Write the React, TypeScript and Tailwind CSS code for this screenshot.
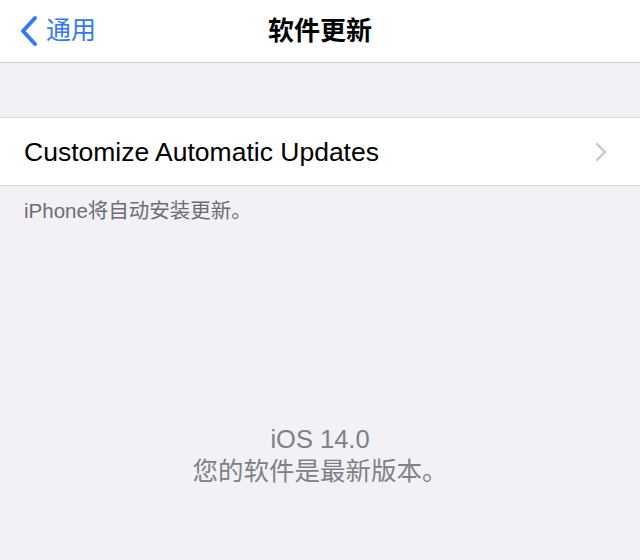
const zh = { fontFamily: '"Liberation Sans", "Noto Sans CJK SC", sans-serif' };

const BackChevron = () => (
  <svg width="20" height="32" viewBox="0 0 20 32" fill="none">
    <path d="M16 3 L4 16 L16 29" stroke="#3478f6" strokeWidth="4" strokeLinecap="round" strokeLinejoin="round" />
  </svg>
);

const RowChevron = () => (
  <svg width="12" height="20" viewBox="0 0 12 20" fill="none">
    <path d="M2 2 L10 10 L2 18" stroke="#c4c4c7" strokeWidth="2.2" strokeLinecap="round" strokeLinejoin="round" />
  </svg>
);

export default function App() {
  return (
    <div className="flex h-[560px] w-[640px] flex-col overflow-hidden bg-[#f1f1f6]" style={zh}>
      {/* nav bar */}
      <div className="relative flex h-[63px] items-center border-b border-[#cfcfd3] bg-white">
        <div className="flex items-center gap-[7px] pl-[19px]">
          <BackChevron />
          <span className="text-[25px] text-[#3478f6]">通用</span>
        </div>
        <div className="absolute inset-x-0 top-0 flex h-full items-center justify-center">
          <span className="text-[26px] font-semibold text-black">软件更新</span>
        </div>
      </div>

      <div className="h-[54px]" />

      <div className="flex h-[69px] items-center justify-between border-y border-[#d8d8dc] bg-white pl-[24px] pr-[33px]">
        <span className="pt-[3px] text-[26.5px] text-black">Customize Automatic Updates</span>
        <RowChevron />
      </div>

      <div className="px-[24px] pt-[10px] text-[20.5px] text-[#6d6d72]">iPhone将自动安装更新。</div>

      <div className="mt-[196px] flex flex-col items-center text-[25.5px] leading-[32px] text-[#818185]">
        <span>iOS 14.0</span>
        <span>您的软件是最新版本。</span>
      </div>
    </div>
  );
}
